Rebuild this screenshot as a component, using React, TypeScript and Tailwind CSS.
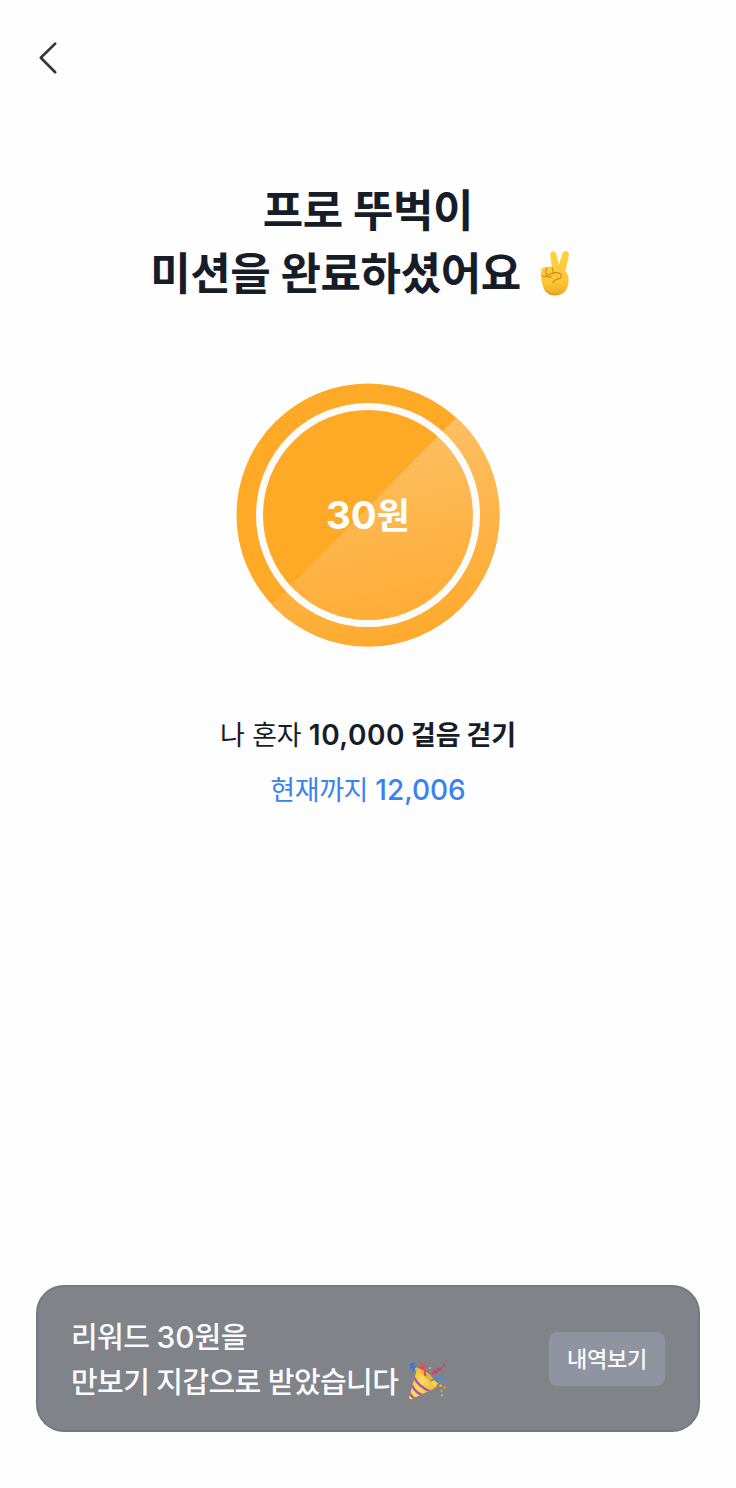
import React from "react";

interface IconProps {
  className?: string;
}

const BackIcon: React.FC<IconProps> = ({ className }) => (
  <svg viewBox="0 0 20 34" fill="none" className={className}>
    <path
      d="M17.2 2.6L2.8 16.7L17.2 31.2"
      stroke="#303742"
      strokeWidth="2.7"
      strokeLinecap="round"
      strokeLinejoin="round"
    />
  </svg>
);

const VictoryHand: React.FC<IconProps> = ({ className }) => (
  <svg viewBox="0 0 32 46" fill="none" className={className}>
    <defs>
      <linearGradient id="skin" x1="0" y1="0" x2="0" y2="1">
        <stop offset="0" stopColor="#ffd243" />
        <stop offset="0.7" stopColor="#fdc634" />
        <stop offset="1" stopColor="#eea824" />
      </linearGradient>
    </defs>
    <path
      d="M1.2 20.5C1.2 17.6 4 16.4 6.6 17.6C8 16.2 10.4 16.2 12 17.4L10.2 5.2C9.7 0.5 15.2 -0.4 16.4 4L19 14.5L22.4 3.6C23.8 -0.8 29.8 0.6 28.9 5.2L25.4 21.5C28 23.6 28.9 27 28.5 32C27.8 40.5 22.8 45.5 15.4 45.5C8.4 45.5 4.6 41.4 2.6 35.5C1.2 31.4 0.8 26 1.2 20.5Z"
      fill="url(#skin)"
    />
    <path
      d="M6.7 18C5.6 20.4 5.6 23.6 6.8 25.8M12 17.6C13.2 19.6 13.4 21.8 13 23.6M1.8 25.5C3 27 5.4 27.2 6.8 25.8C8.2 27.2 10 27.4 11.4 26.6"
      stroke="#d08a1a"
      strokeWidth="1.2"
      strokeLinecap="round"
    />
    <path
      d="M8.4 25.2C11 22.8 16.2 22 19.6 23.4C22.4 24.8 21.6 28.4 18.6 28.8C15.8 29.2 14 30.2 13 32.8"
      stroke="#cf8a1d"
      strokeWidth="1.2"
      strokeLinecap="round"
    />
    <path
      d="M3.5 37.5C7 43.2 14 45 20 43.6C15 46.6 6.6 45.6 3.5 37.5Z"
      fill="#dd9520"
    />
  </svg>
);

const PartyPopper: React.FC<IconProps> = ({ className }) => (
  <svg viewBox="0 0 38 38" fill="none" className={className}>
    <defs>
      <linearGradient id="cone" x1="0" y1="0.2" x2="1" y2="0.8">
        <stop offset="0" stopColor="#eda928" />
        <stop offset="0.4" stopColor="#ffdc5c" />
        <stop offset="0.75" stopColor="#f3b62f" />
      </linearGradient>
      <clipPath id="coneClip">
        <path d="M9 6.5C15 5.5 27 16 28.8 23C28.8 25.5 26 26.8 22.5 28.2L4 37C2 37.8 0.7 36.5 1.3 34.8Z" />
      </clipPath>
    </defs>
    <g clipPath="url(#coneClip)">
      <path d="M0 0H38V38H0Z" fill="url(#cone)" />
      <path
        d="M6 15C8.5 21 15 26.5 22.5 29.5M3.8 23C5.8 28 10.5 32 16 33.5M1.5 30.5C2.7 33.5 5.5 36.5 9 37"
        stroke="#a456b0"
        strokeWidth="2.3"
      />
    </g>
    <path d="M11.5 7.5C14 13.5 20.5 19.5 27.5 22C27 17 18 8 11.5 7.5Z" fill="#e9b136" />
    <path
      d="M2 3L5.5 1.5L2.5 6L7 4.5L4.5 9"
      stroke="#3976d2"
      strokeWidth="1.8"
      strokeLinejoin="round"
    />
    <path
      d="M12.5 1.5L16.2 3.5L13 6L17 8L17.2 14"
      stroke="#e84c5d"
      strokeWidth="2.3"
      strokeLinejoin="round"
    />
    <path
      d="M24 12.5L26.5 8.5L28 11.5L30 6L32 8.5L34 4.5M35.5 1.2L37 4.5"
      stroke="#cf4168"
      strokeWidth="1.5"
      strokeLinejoin="round"
    />
    <path d="M22 18.5C27 15.5 31 15.5 38 16.3L37.8 17.8C32 17.3 28 17.5 23 19.5Z" fill="#4789df" />
    <path d="M25.5 18L30 21.5L27 25L22.5 21Z" fill="#ffce3d" />
    <circle cx="8.5" cy="7" r="1.6" fill="#b9d94a" />
    <circle cx="22" cy="6" r="1" fill="#f2c341" />
    <circle cx="26.5" cy="2.5" r="0.9" fill="#d34f9d" />
    <circle cx="32.5" cy="23.8" r="1.3" fill="#f4b95a" />
    <circle cx="36.6" cy="25.5" r="1" fill="#f4b03e" />
    <circle cx="33.5" cy="28.8" r="1.2" fill="#e8a23d" />
    <circle cx="34" cy="33.3" r="1.1" fill="#e7a1b4" />
  </svg>
);

const RewardCoin: React.FC<{ amount: number }> = ({ amount }) => {
  return (
    <div className="relative flex h-[264px] w-[264px] items-center justify-center">
      <svg viewBox="0 0 264 264" className="absolute inset-0 h-full w-full">
        <defs>
          <linearGradient id="shine" x1="0.55" y1="0.1" x2="0.75" y2="0.95">
            <stop offset="0" stopColor="#fdc36b" />
            <stop offset="0.35" stopColor="#fdba57" />
            <stop offset="1" stopColor="#ffaa2e" />
          </linearGradient>
          <clipPath id="coinClip">
            <circle cx="132" cy="132" r="131.5" />
          </clipPath>
        </defs>
        <circle cx="132" cy="132" r="131.5" fill="#ffaa27" />
        <path
          d="M264 -10V264H-6L36.5 221.5L220 35Z"
          fill="url(#shine)"
          clipPath="url(#coinClip)"
        />
        <circle cx="132" cy="132" r="108.5" fill="none" stroke="#fbfbfa" strokeWidth="7" />
      </svg>
      <span className="relative text-[38.5px] leading-none font-bold text-white">
        {amount}
        <span className="text-[36px]">원</span>
      </span>
    </div>
  );
};

const App: React.FC = () => {
  return (
    <div className="flex h-[1488px] w-[736px] flex-col bg-[#fefefe] font-['Inter','Noto_Sans_CJK_KR',sans-serif] whitespace-nowrap text-[#171d28]">
      <header className="flex h-[116px] items-center pl-[38px]">
        <button>
          <BackIcon className="h-[34px] w-5" />
        </button>
      </header>

      <main className="flex flex-1 flex-col items-center">
        <h1 className="mt-16 flex flex-col items-center text-[44px] leading-[63px] font-bold tracking-[-0.4px]">
          <span>프로 뚜벅이</span>
          <span className="flex items-center pr-[14px]">
            미션을 완료하셨어요
            <VictoryHand className="-mt-1 ml-[19px] h-[46px] w-8" />
          </span>
        </h1>

        <div className="mt-[77px]">
          <RewardCoin amount={30} />
        </div>

        <div className="mt-[61px] flex flex-col items-center text-[28px] leading-[55px]">
          <p>
            <span className="text-[27px] tracking-[-0.2px]">나 혼자 </span>
            <strong className="font-semibold tracking-[0.5px]">10,000</strong>
            <strong className="text-[27px] font-bold tracking-[-0.2px]"> 걸음 걷기</strong>
          </p>
          <p className="text-[#3883ef]">
            <span className="text-[27px] tracking-[-0.4px]">현재까지 </span>
            <span className="font-medium">12,006</span>
          </p>
        </div>
      </main>

      <footer className="mx-9 mb-14 flex h-[147px] items-center justify-between rounded-[28px] border-2 border-[#757882] bg-[#808387] px-[33px] text-[#fafbfe]">
        <div className="pt-0.5 text-[29px] leading-[45px] font-medium tracking-[-0.6px]">
          <p>
            리워드 <span className="text-[30px] tracking-normal">30</span>원을
          </p>
          <p className="flex items-center">
            만보기 지갑으로 받았습니다
            <PartyPopper className="-mt-0.5 ml-[10px] h-[38px] w-[38px]" />
          </p>
        </div>
        <button className="h-[54px] w-[116px] rounded-lg bg-[#9093a0] pt-px text-[22px] font-medium tracking-[-0.3px]">
          내역보기
        </button>
      </footer>
    </div>
  );
};

export default App;
